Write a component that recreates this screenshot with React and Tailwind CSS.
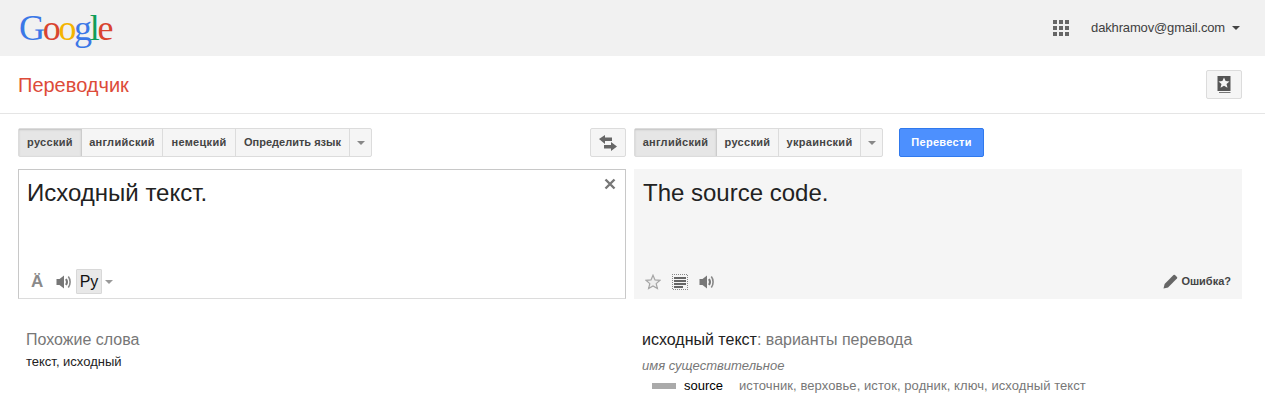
const arial = "font-['Liberation_Sans',Arial,sans-serif]";

function Caret({ className = "" }) {
  return <span className={`block w-0 h-0 border-x-[4px] border-x-transparent border-t-[4px] ${className}`} />;
}

function LangGroup({ items }) {
  return (
    <div className="flex h-[29px] rounded-[2px] border border-[#dcdcdc] bg-[#f5f5f5] text-[11px] font-bold text-[#444]">
      {items.map(([label, w], i) => (
        <div
          key={label}
          className={`flex items-center justify-center border-r border-[#dcdcdc] ${label === "Определить язык" ? "" : "tracking-[0.3px]"} ${i === 0 ? "bg-[#e6e6e6] shadow-[inset_0_1px_2px_rgba(0,0,0,0.15)] border-r-[#ccc]" : ""}`}
          style={{ width: w }}
        >
          {label}
        </div>
      ))}
      <div className="flex items-center justify-center w-[21px]">
        <Caret className="border-t-[#888]" />
      </div>
    </div>
  );
}

function Speaker() {
  return (
    <svg width="15" height="14" viewBox="0 0 15 14" fill="none">
      <path d="M0.500 4h3L8 0.500v13L3.500 10h-3z" fill="#777" />
      <path d="M10 4c1.200 1.800 1.200 4.200 0 6" stroke="#777" strokeWidth="2" />
      <path d="M12.300 1.500c2.400 3 2.400 8 0 11" stroke="#888" strokeWidth="1.600" />
    </svg>
  );
}

export default function App() {
  return (
    <div className={`w-[1265px] h-[417px] overflow-hidden bg-white ${arial}`}>
      <header className="h-[56px] bg-[#f1f1f1] flex items-center justify-between pl-[19px] pr-[25px]">
        <div className="flex text-[36px] leading-none tracking-[-2.3px] font-['Liberation_Serif',serif] -mt-[1px]">
          <span className="text-[#3b78e7]">G</span>
          <span className="text-[#d9442f]">o</span>
          <span className="text-[#f4b400]">o</span>
          <span className="text-[#3b78e7]">g</span>
          <span className="text-[#0f9d58]">l</span>
          <span className="text-[#d9442f]">e</span>
        </div>
        <div className="flex items-center">
          <div className="grid grid-cols-3 gap-[2px] w-[16px] mr-[22px]">
            {Array.from({ length: 9 }).map((_, i) => (
              <span key={i} className="block w-[4px] h-[4px] bg-[#666]" />
            ))}
          </div>
          <span className="text-[13px] text-[#404040] tracking-[-0.15px]">dakhramov@gmail.com</span>
          <Caret className="ml-[7px] border-t-[#444]" />
        </div>
      </header>

      <div className="h-[58px] border-b border-[#e5e5e5] flex items-center justify-between pl-[18px] pr-[23px]">
        <h1 className="text-[20px] font-normal text-[#dd4b39]">Переводчик</h1>
        <div className="w-[36px] h-[29px] rounded-[2px] border border-[#dcdcdc] bg-[#f5f5f5] flex items-center justify-center">
          <svg width="14" height="18" viewBox="0 0 14 18">
            <path d="M0.500 0h13v15h-13z" fill="#555" />
            <path d="M7 1.500l1.600 3.600 3.900.3-3 2.500 1 3.800L7 9.700l-3.500 2 1-3.800-3-2.500 3.900-.3z" fill="#f5f5f5" />
            <path d="M2 16h11.500v1H2z" fill="#777" />
          </svg>
        </div>
      </div>

      <div className="grid grid-cols-[608px_608px] gap-x-[8px] pl-[18px] pt-[14px]">
        <div className="flex justify-between">
          <LangGroup items={[["русский", 63], ["английский", 81], ["немецкий", 73], ["Определить язык", 114]]} />
          <div className="w-[36px] h-[29px] rounded-[2px] border border-[#dcdcdc] bg-[#f5f5f5] flex items-center justify-center">
            <svg width="18" height="16" viewBox="0 0 18 16" fill="#666">
              <path d="M0 4l6-4v2.500h7V6H6v3z" />
              <path d="M18 11.500l-6-4.500v3H5v3.500h7V16z" />
            </svg>
          </div>
        </div>
        <div className="flex items-start">
          <LangGroup items={[["английский", 82], ["русский", 62], ["украинский", 82]]} />
          <button className="ml-[16px] w-[85px] h-[29px] rounded-[2px] border border-[#3079ed] bg-[#4d90fe] text-white text-[11px] font-bold tracking-[0.3px]">
            Перевести
          </button>
        </div>

        <div className="relative mt-[12px] h-[130px] border border-[#c8c8c8] border-b-[#dcdcdc] flex flex-col justify-between">
          <div className="pl-[8px] pt-[7px] text-[24px] leading-[32px] text-[#222]">Исходный текст.</div>
          <svg className="absolute right-[9px] top-[8px]" width="12" height="12" viewBox="0 0 12 12">
            <path d="M1.500 1.500l9 9M10.500 1.500l-9 9" stroke="#777" strokeWidth="2.400" />
          </svg>
          <div className="flex items-center h-[25px] mb-[4px] pl-[12px]">
            <span className="text-[17px] font-bold text-[#8a8a8a] w-[25px] leading-[20px]">Ä</span>
            <Speaker />
            <span className="ml-[5px] w-[26px] h-[25px] flex items-center justify-center rounded-[1px] border border-[#d8d8d8] bg-[#e8e8e8] text-[16px] text-[#111]">Ру</span>
            <Caret className="ml-[3px] border-t-[#999]" />
          </div>
        </div>

        <div className="relative mt-[12px] h-[130px] bg-[#f5f5f5] flex flex-col justify-between">
          <div className="pl-[9px] pt-[8px] text-[24px] leading-[32px] text-[#222]">The source code.</div>
          <div className="flex items-center h-[24px] mb-[5px] pl-[11px] pr-[11px]">
            <svg width="16" height="16" viewBox="0 0 16 16" fill="#eee" stroke="#a5a5a5" strokeWidth="1.200">
              <path d="M8 1.200l2 4.700 5 .4-3.800 3.300 1.200 5L8 11.900l-4.400 2.700 1.200-5L1 6.300l5-.4z" />
            </svg>
            <svg className="ml-[11px]" width="16" height="16" viewBox="0 0 16 16" shapeRendering="crispEdges">
              <rect x="0.500" y="0.500" width="15" height="15" fill="none" stroke="#888" strokeDasharray="1 1" strokeDashoffset="0.500" />
              <path d="M2 3h12v2H2zM2 6h12v2H2zM2 9h12v2H2zM2 12h9v2H2z" fill="#666" />
            </svg>
            <span className="ml-[11px] flex"><Speaker /></span>
            <span className="ml-auto -mt-[2px] flex items-center text-[11px] font-bold text-[#444]">
              <svg className="mr-[3px]" width="15" height="15" viewBox="0 0 14 14" fill="#666">
                <path d="M0.500 13.500l1-4.200L9.800 1a1 1 0 0 1 1.400 0l1.800 1.800a1 1 0 0 1 0 1.400L4.700 12.500z" />
              </svg>
              Ошибка?
            </span>
          </div>
        </div>

        <div className="pt-[31px] pl-[8px]">
          <div className="text-[16px] leading-[20px] text-[#777]">Похожие слова</div>
          <div className="mt-[4px] text-[13px] leading-[15px] text-[#222]">текст, исходный</div>
        </div>
        <div className="pt-[31px] pl-[8px]">
          <div className="text-[16px] leading-[20px] text-[#777]">
            <span className="text-[#222]">исходный текст</span>: варианты перевода
          </div>
          <div className="mt-[8px] text-[13px] leading-[15px] italic text-[#777]">имя существительное</div>
          <div className="mt-[5px] flex items-center text-[13px] leading-[15px]">
            <span className="ml-[10px] w-[24px] h-[6px] bg-[#aaa]" />
            <span className="ml-[8px] w-[55px] text-black">source</span>
            <span className="text-[#777] tracking-[0.08px]">источник, верховье, исток, родник, ключ, исходный текст</span>
          </div>
        </div>
      </div>
    </div>
  );
}
